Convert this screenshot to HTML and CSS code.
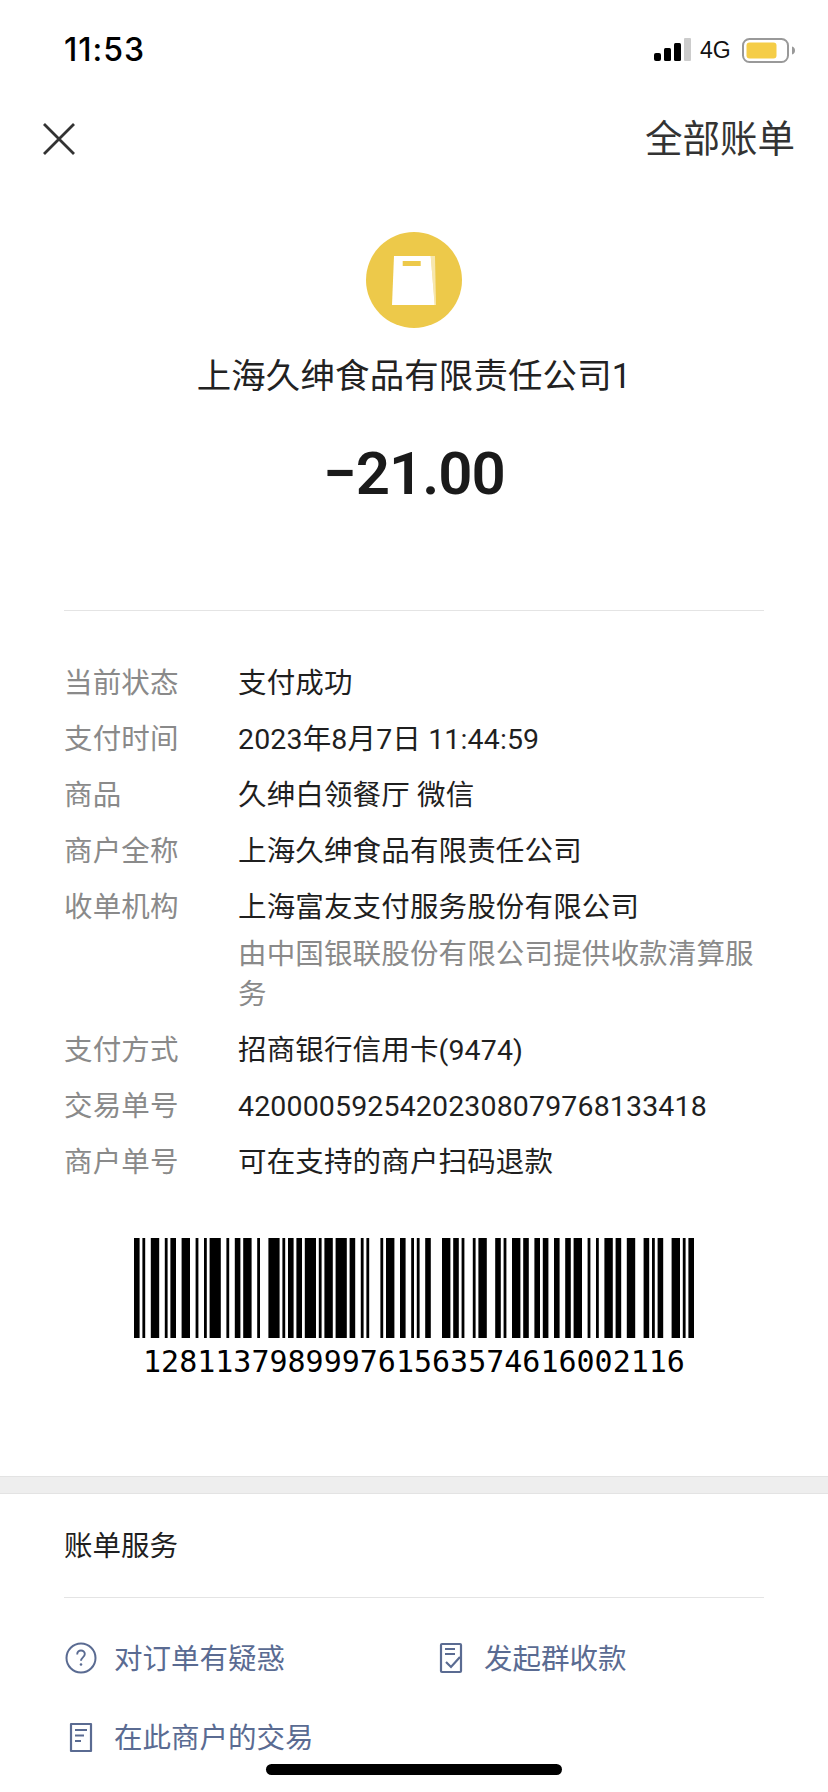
FILE: index.html
```html
<!DOCTYPE html>
<html lang="zh-CN">
<head>
<meta charset="utf-8">
<title>账单详情</title>
<link rel="stylesheet" href="styles.css">
</head>
<body>
<div class="page">
  <div class="status">
    <span class="time">11:53</span>
    <div class="status-right">
      <svg class="signal" width="38" height="24" viewBox="0 0 38 24"><rect x="1" y="15" width="7" height="8" rx="2" fill="#000"/><rect x="11" y="10" width="7" height="13" rx="1.500" fill="#000"/><rect x="21" y="5" width="7" height="18" rx="1.500" fill="#000"/><rect x="31" y="0" width="7" height="23" rx="1" fill="#ccc"/></svg>
      <span class="net">4G</span>
      <svg class="battery" width="54" height="25" viewBox="0 0 54 25"><rect x="1" y="1" width="45" height="23" rx="6.500" fill="none" stroke="#999" stroke-width="2"/><rect x="4.500" y="4.500" width="30" height="16" rx="3" fill="#f5cd47"/><path d="M50 8.500c2 .5 3 2 3 4s-1 3.500-3 4z" fill="#999"/></svg>
    </div>
  </div>
  <div class="nav">
    <svg class="close" width="34" height="34" viewBox="0 0 34 34"><path d="M2 2 32 32M32 2 2 32" fill="none" stroke="#333" stroke-width="2.800"/></svg>
    <span class="nav-link">全部账单</span>
  </div>
  <div class="head">
    <div class="avatar">
      <svg width="44" height="49" viewBox="0 0 44 49"><path d="M2 0H38.700L42.700 49H0z" fill="#fff"/><path d="M38.700 0H43L44 49H42.700z" fill="#fff" opacity=".55"/><rect x="10.700" y="5" width="18" height="5" fill="#edc94a"/></svg>
    </div>
    <div class="merchant">上海久绅食品有限责任公司1</div>
    <div class="amount">−21.00</div>
  </div>
  <div class="rule"></div>
  <dl class="rows">
    <div class="row"><dt>当前状态</dt><dd>支付成功</dd></div>
    <div class="row"><dt>支付时间</dt><dd>2023年8月7日 11:44:59</dd></div>
    <div class="row"><dt>商品</dt><dd>久绅白领餐厅 微信</dd></div>
    <div class="row"><dt>商户全称</dt><dd>上海久绅食品有限责任公司</dd></div>
    <div class="row"><dt>收单机构</dt><dd>上海富友支付服务股份有限公司<p class="note">由中国银联股份有限公司提供收款清算服务</p></dd></div>
    <div class="row"><dt>支付方式</dt><dd>招商银行信用卡(9474)</dd></div>
    <div class="row"><dt>交易单号</dt><dd>42000059254202308079768133418</dd></div>
    <div class="row"><dt>商户单号</dt><dd>可在支持的商户扫码退款</dd></div>
  </dl>
  <div class="barcode">
    <svg class="bars" viewBox="0 0 200 1" preserveAspectRatio="none"><path fill="#000" d="M0 0h2v1h-2zM3 0h1v1h-1zM6 0h3v1h-3zM11 0h1v1h-1zM13 0h2v1h-2zM17 0h3v1h-3zM22 0h1v1h-1zM25 0h1v1h-1zM27 0h4v1h-4zM33 0h1v1h-1zM36 0h2v1h-2zM39 0h3v1h-3zM44 0h1v1h-1zM48 0h4v1h-4zM53 0h1v1h-1zM55 0h2v1h-2zM58 0h2v1h-2zM61 0h4v1h-4zM66 0h1v1h-1zM68 0h3v1h-3zM72 0h4v1h-4zM77 0h2v1h-2zM81 0h1v1h-1zM83 0h1v1h-1zM88 0h1v1h-1zM90 0h3v1h-3zM95 0h2v1h-2zM99 0h1v1h-1zM101 0h1v1h-1zM104 0h2v1h-2zM110 0h3v1h-3zM114 0h2v1h-2zM117 0h1v1h-1zM121 0h1v1h-1zM123 0h3v1h-3zM129 0h2v1h-2zM132 0h1v1h-1zM135 0h3v1h-3zM139 0h2v1h-2zM143 0h2v1h-2zM146 0h2v1h-2zM150 0h2v1h-2zM154 0h2v1h-2zM157 0h3v1h-3zM162 0h1v1h-1zM165 0h1v1h-1zM168 0h3v1h-3zM172 0h2v1h-2zM176 0h3v1h-3zM182 0h2v1h-2zM185 0h1v1h-1zM187 0h2v1h-2zM192 0h3v1h-3zM196 0h1v1h-1zM198 0h2v1h-2z"/></svg>
    <div class="code">128113798999761563574616002116</div>
  </div>
  <div class="band"></div>
  <section class="service">
    <h2>账单服务</h2>
    <div class="actions">
      <a class="action"><svg width="34" height="34" viewBox="0 0 34 34"><circle cx="17" cy="17" r="14.500" fill="none" stroke="#5a6b92" stroke-width="2"/><path d="M13.200 13.500c0-2.600 1.700-4 3.800-4s3.800 1.500 3.800 3.600c0 3.300-3.800 3.300-3.800 6.700" fill="none" stroke="#5a6b92" stroke-width="1.900"/><circle cx="17" cy="23.500" r="1.300" fill="#5a6b92"/></svg><span>对订单有疑惑</span></a>
      <a class="action"><svg width="34" height="34" viewBox="0 0 34 34"><path d="M27 19V4a1 1 0 0 0-1-1H8a1 1 0 0 0-1 1v26a1 1 0 0 0 1 1h18a1 1 0 0 0 1-1V19z" fill="none" stroke="#5a6b92" stroke-width="2.200"/><path d="M11 8h10M11 13h10" stroke="#5a6b92" stroke-width="2.200"/><path d="M12 21l5 5 9-10" fill="none" stroke="#5a6b92" stroke-width="2.200"/></svg><span>发起群收款</span></a>
      <a class="action"><svg width="34" height="34" viewBox="0 0 34 34"><path d="M7 4h20v27H7z" fill="none" stroke="#5a6b92" stroke-width="2.200" stroke-linejoin="round"/><path d="M11 10h12M11 15.500h9M11 21h6" stroke="#5a6b92" stroke-width="2.200"/></svg><span>在此商户的交易</span></a>
    </div>
  </section>
  <div class="home"></div>
</div>
</body>
</html>
```
FILE: styles.css
```css
* { box-sizing: border-box; }
html, body { margin: 0; padding: 0; }
body { background: #fff; font-family: Roboto, "Noto Sans CJK SC", sans-serif; color: #1a1a1a; }
.page { position: relative; width: 828px; height: 1792px; overflow: hidden; background: #fff; }
.status { display: flex; justify-content: space-between; align-items: center; height: 50px; margin-top: 25px; padding: 0 32px 0 64px; }
.time { font: 500 32px/40px Inter, "Liberation Sans", sans-serif; color: #000; letter-spacing: 1px; }
.status-right { display: flex; align-items: center; gap: 9px; }
.net { width: 33px; font: 400 23px/26px "Liberation Sans", sans-serif; color: #111; }
.nav { display: flex; justify-content: space-between; align-items: center; height: 60px; margin-top: 34px; padding: 0 33px 0 42px; }
.nav-link { font-size: 37.500px; line-height: 50px; color: #333; }
.head { display: flex; flex-direction: column; align-items: center; margin-top: 63px; }
.avatar { display: flex; align-items: center; justify-content: center; width: 96px; height: 96px; border-radius: 50%; background: #edc94a; }
.merchant { margin-top: 25px; font-size: 34.400px; line-height: 46px; color: #222; letter-spacing: .2px; }
.amount { margin-top: 35px; font: 600 60px/80px Roboto, sans-serif; color: #1a1a1a; letter-spacing: -1px; }
.rule { height: 1px; margin: 96px 64px 0; background: #e4e4e4; }
.rows { margin: 45px 64px 0; }
.row { display: flex; min-height: 56px; font-size: 28.500px; line-height: 56px; letter-spacing: .15px; }
dt { flex: 0 0 174px; color: #8a8a8a; }
dd { flex: 1; margin: 0; color: #1f1f1f; }
.note { margin: -1px 0 8px; line-height: 40px; color: #8a8a8a; }
.barcode { display: flex; flex-direction: column; align-items: center; margin-top: 47px; }
.bars { display: block; width: 560px; height: 100px; }
.code { margin-top: 5px; font: 400 30px/38px "DejaVu Sans Mono", monospace; color: #000; }
.band { height: 18px; margin-top: 95px; background: #eee; border-top: 1px solid #e3e3e3; border-bottom: 1px solid #e3e3e3; }
.service { margin: 0 64px; }
.service h2 { margin: 0; height: 104px; padding-top: 31px; font-size: 28.500px; line-height: 44px; font-weight: 400; color: #1f1f1f; border-bottom: 1px solid #e4e4e4; }
.actions { display: grid; grid-template-columns: 370px 1fr; row-gap: 45px; margin-top: 43px; }
.action { display: flex; align-items: center; gap: 16px; height: 34px; font-size: 28.500px; color: #5a6b92; }
.action span { padding-bottom: 3px; }
.home { position: absolute; left: 266px; bottom: 17px; width: 296px; height: 11px; border-radius: 6px; background: #000; }
```
